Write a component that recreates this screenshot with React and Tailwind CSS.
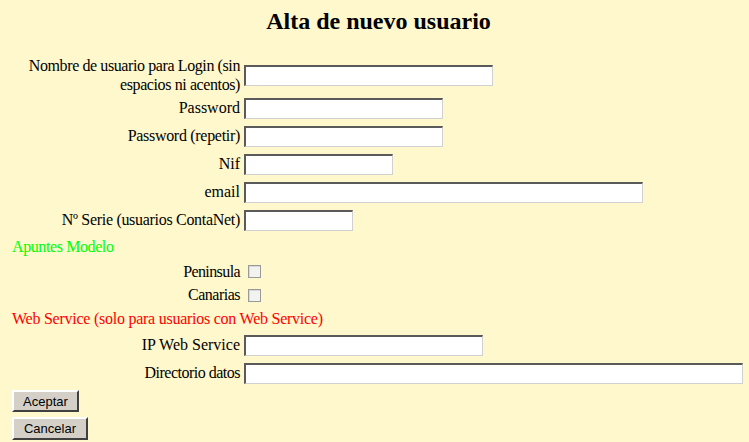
export default function App() {
    const inputCls = "shrink-0 h-[21px] bg-white border-t-2 border-l-2 border-b border-r border-t-[#5a5a5a] border-l-[#5a5a5a] border-b-[#d0d0d0] border-r-[#d0d0d0] outline-none";
    const btnCls = "bg-[#d4d0c8] border-2 border-t-white border-l-white border-b-[#404040] border-r-[#404040] font-['Liberation_Sans',sans-serif] text-[13px] text-black leading-none";
    const checkCls = "appearance-none w-[13px] h-[13px] ml-[8px] border border-[#9a9a9a] bg-[#f2f2ee] shadow-[inset_1px_1px_0_#d8d8d8]";

    // filas con input
    const rows = [
        { label: "Password", w: "w-[199px]", t: "" },
        { label: "Password (repetir)", w: "w-[199px]", t: "tracking-[-0.3px]" },
        { label: "Nif", w: "w-[149px]", t: "" },
        { label: "email", w: "w-[399px]", t: "" },
        { label: "Nº Serie (usuarios ContaNet)", w: "w-[109px]", t: "tracking-[-0.3px]" },
    ];

    return (
        <div className="min-h-screen bg-[#fff8cd] text-black text-[16px] font-['Liberation_Serif',serif] pl-[12px] pr-[4px]">
            <h1 className="text-center text-[24px] font-bold leading-[28px] pt-[7px] mb-[21px]">
                Alta de nuevo usuario
            </h1>

            <div className="flex flex-col">
                <div className="flex items-center h-[38px]">
                    <div className="w-[228px] text-right leading-[19px] tracking-[-0.4px]">
                        Nombre de usuario para Login (sin espacios ni acentos)
                    </div>
                    <input type="text" className={`${inputCls} w-[249px] ml-[4px]`} />
                </div>

                {rows.map((r) => (
                    <div key={r.label} className="flex items-center h-[28px]">
                        <div className={`w-[228px] text-right ${r.t}`}>{r.label}</div>
                        <input type="text" className={`${inputCls} ${r.w} ml-[4px]`} />
                    </div>
                ))}

                <div className="flex items-center h-[26px] text-[#00ff00] tracking-[-0.4px]">Apuntes Modelo</div>

                <div className="flex items-center h-[23px]">
                    <div className="w-[228px] text-right tracking-[-0.6px]">Peninsula</div>
                    <input type="checkbox" className={checkCls} />
                </div>
                <div className="flex items-center h-[24px]">
                    <div className="w-[228px] text-right tracking-[-0.5px]">Canarias</div>
                    <input type="checkbox" className={checkCls} />
                </div>

                <div className="flex items-center h-[24px] text-[#ff0000] tracking-[-0.25px]">
                    Web Service (solo para usuarios con Web Service)
                </div>

                <div className="flex items-center h-[28px]">
                    <div className="w-[228px] text-right">IP Web Service</div>
                    <input type="text" className={`${inputCls} w-[239px] ml-[4px]`} />
                </div>
                <div className="flex items-center h-[28px]">
                    <div className="w-[228px] text-right tracking-[-0.5px]">Directorio datos</div>
                    <input type="text" className={`${inputCls} w-[499px] ml-[4px]`} />
                </div>

                <div className="flex items-center h-[28px]">
                    <button className={`${btnCls} w-[67px] h-[22px]`}>Aceptar</button>
                </div>
                <div className="flex items-center h-[27px]">
                    <button className={`${btnCls} w-[76px] h-[23px]`}>Cancelar</button>
                </div>
            </div>
        </div>
    );
}
